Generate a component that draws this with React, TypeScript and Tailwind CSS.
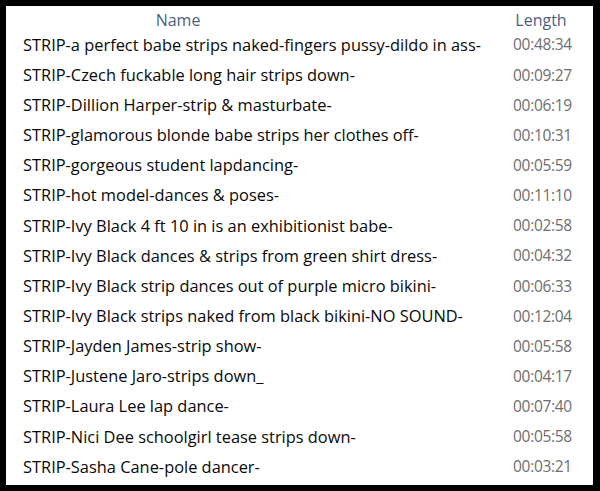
import React from 'react';

const rows: [string, string][] = [
  ['STRIP-a perfect babe strips naked-fingers pussy-dildo in ass-', '00:48:34'],
  ['STRIP-Czech fuckable long hair strips down-', '00:09:27'],
  ['STRIP-Dillion Harper-strip & masturbate-', '00:06:19'],
  ['STRIP-glamorous blonde babe strips her clothes off-', '00:10:31'],
  ['STRIP-gorgeous student lapdancing-', '00:05:59'],
  ['STRIP-hot model-dances & poses-', '00:11:10'],
  ['STRIP-Ivy Black 4 ft 10 in is an exhibitionist babe-', '00:02:58'],
  ['STRIP-Ivy Black dances & strips from green shirt dress-', '00:04:32'],
  ['STRIP-Ivy Black strip dances out of purple micro bikini-', '00:06:33'],
  ['STRIP-Ivy Black strips naked from black bikini-NO SOUND-', '00:12:04'],
  ['STRIP-Jayden James-strip show-', '00:05:58'],
  ['STRIP-Justene Jaro-strips down_', '00:04:17'],
  ['STRIP-Laura Lee lap dance-', '00:07:40'],
  ['STRIP-Nici Dee schoolgirl tease strips down-', '00:05:58'],
  ['STRIP-Sasha Cane-pole dancer-', '00:03:21'],
];

const App: React.FC = () => {
  return (
    <div className="w-[600px] h-[491px] bg-black pt-[6px] pl-[6px] pr-[7px] pb-[6px]" style={{ fontFamily: '"Open Sans", "Noto Sans", sans-serif' }}>
      <div className="w-full h-full bg-white">
        {/* header */}
        <div className="flex h-[24px] items-center text-[16px] text-[#4d6082] pt-[4px]">
          <div className="w-[344px] shrink-0 text-center">Name</div>
          <div className="w-[164px] shrink-0" />
          <div className="w-[54px] shrink-0 text-center">Length</div>
        </div>
        {rows.map(([name, len]) => (
          <div key={name} className="flex h-[30.15px] items-center">
            <div className="w-[507px] pl-[17px] text-[16.4px] text-[#0a0a0a] whitespace-nowrap">{name}</div>
            <div className="text-[15.5px] text-[#6e6e6e] tracking-[-0.3px]">{len}</div>
          </div>
        ))}
      </div>
    </div>
  );
};

export default App;
